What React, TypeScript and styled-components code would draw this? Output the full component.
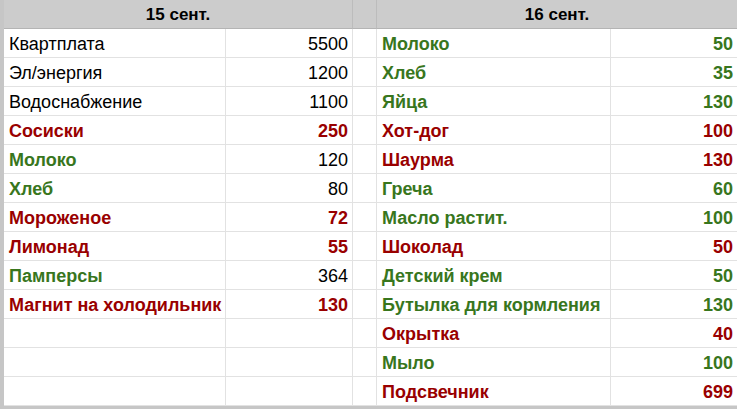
import styled, { createGlobalStyle } from "styled-components";

const GlobalStyle = createGlobalStyle`
  html, body {
    margin: 0;
    padding: 0;
    background: #fff;
  }
  body {
    font-family: "Liberation Sans", Arial, sans-serif;
  }
`;

type Tone = "plain" | "red" | "green";

type Entry = {
  name: string;
  nameTone: Tone;
  value: number;
  valueTone: Tone;
};

const left: Entry[] = [
  { name: "Квартплата", nameTone: "plain", value: 5500, valueTone: "plain" },
  { name: "Эл/энергия", nameTone: "plain", value: 1200, valueTone: "plain" },
  { name: "Водоснабжение", nameTone: "plain", value: 1100, valueTone: "plain" },
  { name: "Сосиски", nameTone: "red", value: 250, valueTone: "red" },
  { name: "Молоко", nameTone: "green", value: 120, valueTone: "plain" },
  { name: "Хлеб", nameTone: "green", value: 80, valueTone: "plain" },
  { name: "Мороженое", nameTone: "red", value: 72, valueTone: "red" },
  { name: "Лимонад", nameTone: "red", value: 55, valueTone: "red" },
  { name: "Памперсы", nameTone: "green", value: 364, valueTone: "plain" },
  { name: "Магнит на холодильник", nameTone: "red", value: 130, valueTone: "red" },
];

const right: Entry[] = [
  { name: "Молоко", nameTone: "green", value: 50, valueTone: "green" },
  { name: "Хлеб", nameTone: "green", value: 35, valueTone: "green" },
  { name: "Яйца", nameTone: "green", value: 130, valueTone: "green" },
  { name: "Хот-дог", nameTone: "red", value: 100, valueTone: "red" },
  { name: "Шаурма", nameTone: "red", value: 130, valueTone: "red" },
  { name: "Греча", nameTone: "green", value: 60, valueTone: "green" },
  { name: "Масло растит.", nameTone: "green", value: 100, valueTone: "green" },
  { name: "Шоколад", nameTone: "red", value: 50, valueTone: "red" },
  { name: "Детский крем", nameTone: "green", value: 50, valueTone: "green" },
  { name: "Бутылка для кормления", nameTone: "green", value: 130, valueTone: "green" },
  { name: "Окрытка", nameTone: "red", value: 40, valueTone: "red" },
  { name: "Мыло", nameTone: "green", value: 100, valueTone: "green" },
  { name: "Подсвечник", nameTone: "red", value: 699, valueTone: "red" },
];

const ROWS = 13;

const toneColor = (t?: Tone) =>
  t === "red" ? "#990000" : t === "green" ? "#38761d" : "#000";

export default function App() {
  const rows = Array.from({ length: ROWS }, (_, i) => ({
    l: left[i],
    r: right[i],
  }));

  return (
    <>
      <GlobalStyle />
      <Sheet>
        <HeadCell $span={2}>15 сент.</HeadCell>
        <HeadCell />
        <HeadCell $span={2} $last>
          16 сент.
        </HeadCell>
        {rows.map(({ l, r }, i) => (
          <Row key={i}>
            <Cell $tone={l?.nameTone}>{l?.name}</Cell>
            <Cell $tone={l?.valueTone} $num>
              {l?.value}
            </Cell>
            <Cell />
            <Cell $tone={r?.nameTone}>{r?.name}</Cell>
            <Cell $tone={r?.valueTone} $num $last>
              {r?.value}
            </Cell>
          </Row>
        ))}
      </Sheet>
    </>
  );
}

const Sheet = styled.div`
  display: grid;
  grid-template-columns: 222px 127px 24px 234px 126px;
  grid-auto-rows: 29px;
  width: 733px;
  border-left: 4px solid #c6c6c6;
  border-bottom: 3px solid #c6c6c6;
`;

const Row = styled.div`
  display: contents;
`;

const HeadCell = styled.div<{ $span?: number; $last?: boolean }>`
  grid-column: span ${(p) => p.$span ?? 1};
  display: flex;
  align-items: center;
  justify-content: center;
  padding-top: 2px;
  background: #cccccc;
  border-right: ${(p) => (p.$last ? "none" : "1px solid #bcbcbc")};
  border-bottom: 1px solid #b4b4b4;
  font-size: 17px;
  font-weight: 700;
  color: #000;
`;

const Cell = styled.div<{ $tone?: Tone; $num?: boolean; $last?: boolean }>`
  display: flex;
  align-items: center;
  justify-content: ${(p) => (p.$num ? "flex-end" : "flex-start")};
  padding: 2px 4px 0 5px;
  border-right: ${(p) => (p.$last ? "none" : "1px solid #e2e2e2")};
  border-bottom: 1px solid #e2e2e2;
  font-size: 18px;
  font-weight: ${(p) => (p.$tone && p.$tone !== "plain" ? 700 : 400)};
  color: ${(p) => toneColor(p.$tone)};
  white-space: nowrap;
  overflow: hidden;
`;
